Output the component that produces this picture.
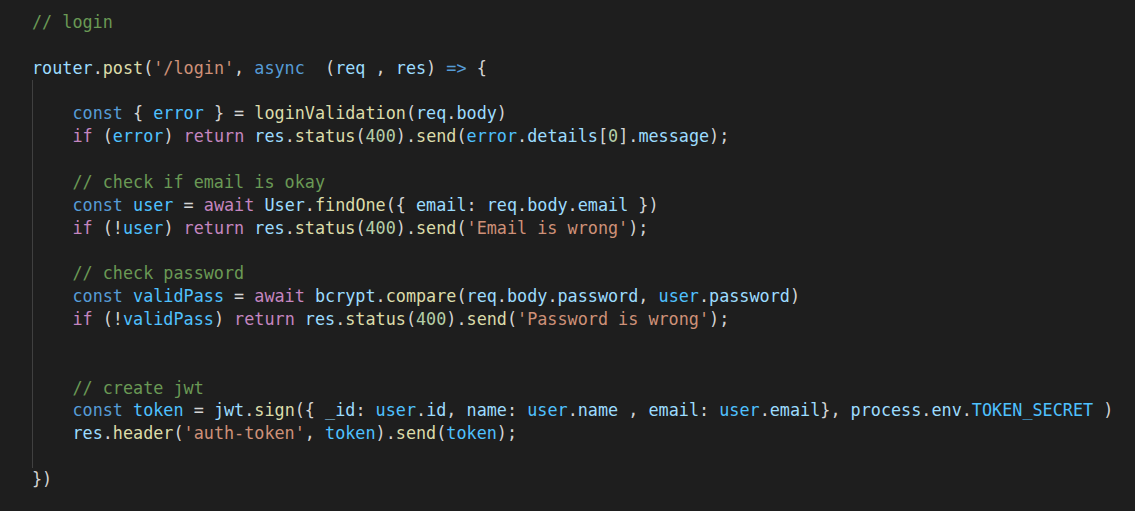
// VS Code Dark+ style snippet of an express login route.
const tone = {
  c: "text-[#6a9955]", // comment
  k: "text-[#569cd6]", // storage keyword
  x: "text-[#c586c0]", // control keyword
  v: "text-[#9cdcfe]", // variable / property
  n: "text-[#4fc1ff]", // const
  f: "text-[#dcdcaa]", // function
  s: "text-[#ce9178]", // string
  d: "text-[#b5cea8]", // number
  p: "text-[#d4d4d4]", // punctuation
};

const t = (type, text) => ({ type, text });

const head = [
  [t("c", "// login")],
  [],
  [
    t("v", "router"), t("p", "."), t("f", "post"), t("p", "("), t("s", "'/login'"),
    t("p", ", "), t("k", "async"), t("p", "  ("), t("v", "req"), t("p", " , "),
    t("v", "res"), t("p", ") "), t("k", "=>"), t("p", " {"),
  ],
];

const body = [
  [],
  [
    t("k", "const"), t("p", " { "), t("n", "error"), t("p", " } = "),
    t("f", "loginValidation"), t("p", "("), t("v", "req"), t("p", "."), t("v", "body"), t("p", ")"),
  ],
  [
    t("x", "if"), t("p", " ("), t("n", "error"), t("p", ") "), t("x", "return"), t("p", " "),
    t("v", "res"), t("p", "."), t("f", "status"), t("p", "("), t("d", "400"), t("p", ")."),
    t("f", "send"), t("p", "("), t("n", "error"), t("p", "."), t("v", "details"), t("p", "["),
    t("d", "0"), t("p", "]."), t("v", "message"), t("p", ");"),
  ],
  [],
  [t("c", "// check if email is okay")],
  [
    t("k", "const"), t("p", " "), t("n", "user"), t("p", " = "), t("x", "await"), t("p", " "),
    t("v", "User"), t("p", "."), t("f", "findOne"), t("p", "({ "), t("v", "email"), t("p", ": "),
    t("v", "req"), t("p", "."), t("v", "body"), t("p", "."), t("v", "email"), t("p", " })"),
  ],
  [
    t("x", "if"), t("p", " (!"), t("n", "user"), t("p", ") "), t("x", "return"), t("p", " "),
    t("v", "res"), t("p", "."), t("f", "status"), t("p", "("), t("d", "400"), t("p", ")."),
    t("f", "send"), t("p", "("), t("s", "'Email is wrong'"), t("p", ");"),
  ],
  [],
  [t("c", "// check password")],
  [
    t("k", "const"), t("p", " "), t("n", "validPass"), t("p", " = "), t("x", "await"), t("p", " "),
    t("v", "bcrypt"), t("p", "."), t("f", "compare"), t("p", "("), t("v", "req"), t("p", "."),
    t("v", "body"), t("p", "."), t("v", "password"), t("p", ", "), t("n", "user"), t("p", "."),
    t("v", "password"), t("p", ")"),
  ],
  [
    t("x", "if"), t("p", " (!"), t("n", "validPass"), t("p", ") "), t("x", "return"), t("p", " "),
    t("v", "res"), t("p", "."), t("f", "status"), t("p", "("), t("d", "400"), t("p", ")."),
    t("f", "send"), t("p", "("), t("s", "'Password is wrong'"), t("p", ");"),
  ],
  [],
  [],
  [t("c", "// create jwt")],
  [
    t("k", "const"), t("p", " "), t("n", "token"), t("p", " = "), t("v", "jwt"), t("p", "."),
    t("f", "sign"), t("p", "({ "), t("v", "_id"), t("p", ": "), t("n", "user"), t("p", "."),
    t("v", "id"), t("p", ", "), t("v", "name"), t("p", ": "), t("n", "user"), t("p", "."),
    t("v", "name"), t("p", " , "), t("v", "email"), t("p", ": "), t("n", "user"), t("p", "."),
    t("v", "email"), t("p", "}, "), t("v", "process"), t("p", "."), t("v", "env"), t("p", "."),
    t("n", "TOKEN_SECRET"), t("p", " )"),
  ],
  [
    t("v", "res"), t("p", "."), t("f", "header"), t("p", "("), t("s", "'auth-token'"),
    t("p", ", "), t("n", "token"), t("p", ")."), t("f", "send"), t("p", "("), t("n", "token"),
    t("p", ");"),
  ],
  [],
];

const tail = [[t("p", "})")]];

function Line({ tokens, indent }) {
  return (
    <div className="h-[22.85px] whitespace-pre leading-[22.85px]">
      {indent && tokens.length > 0 ? <span>{"    "}</span> : null}
      {tokens.map((tok, i) => (
        <span key={i} className={tone[tok.type]}>
          {tok.text}
        </span>
      ))}
      {tokens.length === 0 ? " " : null}
    </div>
  );
}

export default function App() {
  return (
    <div className="h-[511px] w-[1135px] overflow-hidden bg-[#1e1e1e] pl-[32px] pt-[11px] font-['DejaVu_Sans_Mono',monospace] text-[16.8px] text-[#d4d4d4]">
      {head.map((tokens, i) => (
        <Line key={"h" + i} tokens={tokens} />
      ))}
      {/* indent guide runs down the function body */}
      <div className="shadow-[inset_1px_0_0_#404040]">
        {body.map((tokens, i) => (
          <Line key={"b" + i} tokens={tokens} indent />
        ))}
      </div>
      {tail.map((tokens, i) => (
        <Line key={"t" + i} tokens={tokens} />
      ))}
    </div>
  );
}
